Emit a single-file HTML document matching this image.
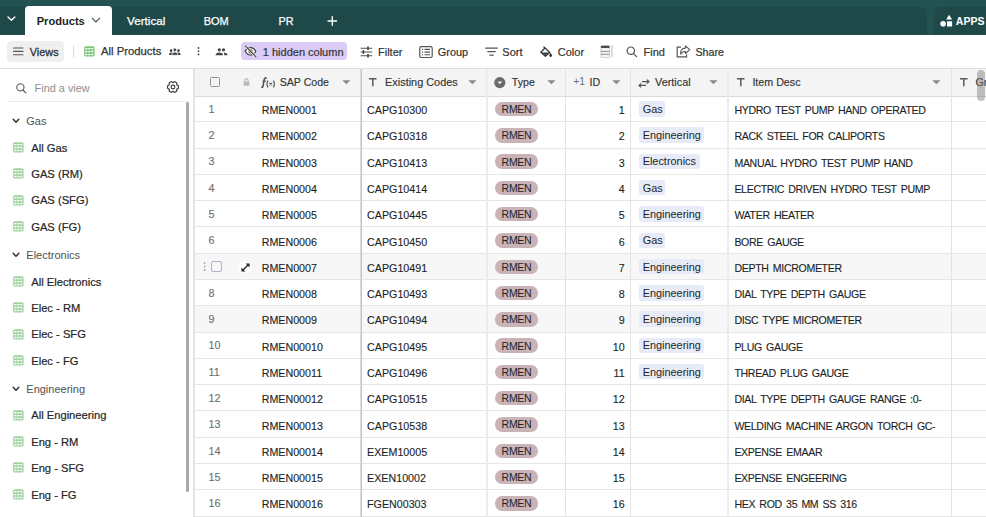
<!DOCTYPE html>
<html><head><meta charset="utf-8"><style>
html,body{margin:0;padding:0;}
body{width:986px;height:517px;overflow:hidden;position:relative;background:#fff;font-family:"Liberation Sans", sans-serif;}
.t{position:absolute;white-space:pre;}
.r{position:absolute;}
svg.r{overflow:visible;}
</style></head><body>
<div class="r" style="left:0.00px;top:0.00px;width:986.00px;height:35.00px;background:#225352;"></div>
<div class="r" style="left:0.00px;top:6.80px;width:927.00px;height:28.20px;background:#1e4948;border-top-right-radius:6px"></div>
<div class="r" style="left:934.00px;top:6.80px;width:60.00px;height:28.20px;background:#1e4948;border-top-left-radius:6px"></div>
<svg class="r" style="left:7.00px;top:16.00px" width="9" height="6" viewBox="0 0 9 6"><polyline points="1.0,0.9 4.4,4.3 7.8,0.9" fill="none" stroke="#fff" stroke-width="1.4" stroke-linecap="round" stroke-linejoin="round"/></svg>
<div class="r" style="left:25.00px;top:6.00px;width:87.00px;height:30.00px;background:#ffffff;border-top-left-radius:4px;border-top-right-radius:4px"></div>
<div class="t" style="left:36.70px;top:15.60px;font-size:11.1px;line-height:11.1px;font-weight:700;color:#1d1f25;">Products</div>
<svg class="r" style="left:91.00px;top:17.00px" width="10" height="7" viewBox="0 0 10 7"><polyline points="1.2,1.2 4.9,5 8.6,1.2" fill="none" stroke="#555" stroke-width="1.1" stroke-linecap="round" stroke-linejoin="round"/></svg>
<div class="t" style="left:127.00px;top:15.10px;font-size:11.7px;line-height:11.7px;font-weight:400;color:#fff;-webkit-text-stroke:0.25px #fff">Vertical</div>
<div class="t" style="left:203.70px;top:15.69px;font-size:11.0px;line-height:11.0px;font-weight:400;color:#fff;-webkit-text-stroke:0.25px #fff">BOM</div>
<div class="t" style="left:278.60px;top:15.86px;font-size:10.8px;line-height:10.8px;font-weight:400;color:#fff;-webkit-text-stroke:0.25px #fff">PR</div>
<svg class="r" style="left:327.00px;top:16.00px" width="11" height="10" viewBox="0 0 11 10"><path d="M5.3 0.8V9.2M1 5H9.6" stroke="#fff" stroke-width="1.4" stroke-linecap="round"/></svg>
<svg class="r" style="left:939.00px;top:14.00px" width="15" height="13" viewBox="0 0 15 13"><path d="M10.1 0.8L13.1 5.6H7.1Z" fill="#fff"/><circle cx="4.1" cy="9.7" r="2.8" fill="#fff"/><rect x="8" y="7.3" width="5.1" height="5.2" fill="#fff"/></svg>
<div class="t" style="left:955.80px;top:16.11px;font-size:10.5px;line-height:10.5px;font-weight:700;color:#fff;">APPS</div>
<div class="r" style="left:0.00px;top:35.00px;width:986.00px;height:33.00px;background:#ffffff;"></div>
<div class="r" style="left:0.00px;top:68.00px;width:986.00px;height:1.00px;background:#dedede;"></div>
<div class="r" style="left:7.00px;top:41.00px;width:57.00px;height:21.00px;background:#efefef;border-radius:4px"></div>
<svg class="r" style="left:12.50px;top:47.00px" width="12" height="9" viewBox="0 0 12 9"><path d="M0.5 1H10M0.5 4.4H10M0.5 7.8H10" stroke="#555" stroke-width="1.1" stroke-linecap="round"/></svg>
<div class="t" style="left:29.80px;top:46.77px;font-size:10.9px;line-height:10.9px;font-weight:400;color:#333;-webkit-text-stroke:0.3px #333">Views</div>
<div class="r" style="left:73.00px;top:45.00px;width:1.00px;height:13.00px;background:#dcdcdc;"></div>
<svg class="r" style="left:83.50px;top:46.30px" width="11" height="11" viewBox="0 0 11 11"><rect x="0.2" y="0.2" width="10.4" height="10.4" rx="1.6" fill="#7cc47c"/><rect x="1.3" y="2.0" width="2.1" height="1.4" fill="#fff"/><rect x="4.2" y="2.0" width="2.1" height="1.4" fill="#fff"/><rect x="7.2" y="2.0" width="2.1" height="1.4" fill="#fff"/><rect x="1.3" y="4.9" width="2.1" height="1.4" fill="#fff"/><rect x="4.2" y="4.9" width="2.1" height="1.4" fill="#fff"/><rect x="7.2" y="4.9" width="2.1" height="1.4" fill="#fff"/><rect x="1.3" y="7.8" width="2.1" height="1.4" fill="#fff"/><rect x="4.2" y="7.8" width="2.1" height="1.4" fill="#fff"/><rect x="7.2" y="7.8" width="2.1" height="1.4" fill="#fff"/></svg>
<div class="t" style="left:101.00px;top:46.43px;font-size:11.3px;line-height:11.3px;font-weight:400;color:#333;-webkit-text-stroke:0.25px #333">All Products</div>
<svg class="r" style="left:169.30px;top:47.60px" width="12" height="8" viewBox="0 0 12 8"><ellipse cx="2.1" cy="2.6" rx="1.2" ry="1.6" fill="#444"/><path d="M0 7C0 5.3 0.9 4.5 2.1 4.5S4.2 5.3 4.2 7Z" fill="#444"/><ellipse cx="9.5" cy="2.6" rx="1.2" ry="1.6" fill="#444"/><path d="M7.4 7C7.4 5.3 8.3 4.5 9.5 4.5S11.6 5.3 11.6 7Z" fill="#444"/><ellipse cx="5.8" cy="1.9" rx="1.7" ry="1.95" fill="#444" stroke="#fff" stroke-width="0.7"/><path d="M2.7 7.3C2.8 5 4.2 4.1 5.8 4.1S8.8 5 8.9 7.3Z" fill="#444" stroke="#fff" stroke-width="0.7"/></svg>
<svg class="r" style="left:196.50px;top:47.00px" width="4" height="9" viewBox="0 0 4 9"><circle cx="1.5" cy="1" r="0.95" fill="#444"/><circle cx="1.5" cy="4.1" r="0.95" fill="#444"/><circle cx="1.5" cy="7.4" r="0.95" fill="#444"/></svg>
<svg class="r" style="left:214.50px;top:47.50px" width="14" height="8" viewBox="0 0 14 8"><circle cx="4.3" cy="1.8" r="1.6" fill="#444"/><circle cx="8.5" cy="1.8" r="1.6" fill="#444"/><path d="M0.5 7.3C0.6 5.3 2.3 4.4 4.3 4.4S8 5.3 8.1 7.3Z" fill="#444"/><path d="M8.6 4.5C10.6 4.5 12.5 5.4 12.6 7.3H9.3C9.3 6.1 9.1 5.2 8.6 4.5Z" fill="#444"/></svg>
<div class="r" style="left:241.00px;top:42.20px;width:105.60px;height:18.00px;background:#dacbf7;border-radius:4px"></div>
<svg class="r" style="left:244.00px;top:45.00px" width="13" height="12" viewBox="0 0 13 12"><path d="M1.2 6.3C2.6 3.8 4.4 2.6 6.5 2.6S10.4 3.8 11.8 6.3C10.4 8.8 8.6 10 6.5 10S2.6 8.8 1.2 6.3Z" fill="#fff" stroke="#3a3a3a" stroke-width="1.2"/><circle cx="6.6" cy="6.4" r="2.1" fill="#3a3a3a"/><path d="M2 1.6L11.6 11.4" stroke="#fff" stroke-width="2.4"/><path d="M1.6 1.2L11.8 11.6" stroke="#3a3a3a" stroke-width="1.15" stroke-linecap="round"/></svg>
<div class="t" style="left:262.80px;top:46.69px;font-size:11.0px;line-height:11.0px;font-weight:400;color:#333;-webkit-text-stroke:0.2px #333">1 hidden column</div>
<svg class="r" style="left:360.00px;top:45.50px" width="13" height="12" viewBox="0 0 13 12"><path d="M0.6 2.2H12.2M0.6 6H12.2M0.6 9.8H12.2" stroke="#555" stroke-width="1.1"/><rect x="7.2" y="0.3" width="1.6" height="4" rx="0.8" fill="#444"/><rect x="2.6" y="4" width="1.6" height="4" rx="0.8" fill="#444"/><rect x="7.2" y="7.8" width="1.6" height="4" rx="0.8" fill="#444"/></svg>
<div class="t" style="left:378.00px;top:46.69px;font-size:11.0px;line-height:11.0px;font-weight:400;color:#333;-webkit-text-stroke:0.2px #333">Filter</div>
<svg class="r" style="left:418.50px;top:45.50px" width="14" height="12" viewBox="0 0 14 12"><rect x="0.8" y="0.7" width="12.4" height="10.8" rx="1.5" fill="none" stroke="#555" stroke-width="1.2"/><path d="M3 3.4H4.2M3 6.1H4.2M3 8.8H4.2M5.5 3.4H11M5.5 6.1H11M5.5 8.8H11" stroke="#555" stroke-width="1.1"/></svg>
<div class="t" style="left:437.80px;top:46.77px;font-size:10.9px;line-height:10.9px;font-weight:400;color:#333;-webkit-text-stroke:0.2px #333">Group</div>
<svg class="r" style="left:484.50px;top:46.50px" width="13" height="10" viewBox="0 0 13 10"><path d="M0.7 1.2H12.3M2.8 4.7H10.2M4.8 8.2H8.2" stroke="#555" stroke-width="1.2" stroke-linecap="round"/></svg>
<div class="t" style="left:502.30px;top:46.69px;font-size:11.0px;line-height:11.0px;font-weight:400;color:#333;-webkit-text-stroke:0.2px #333">Sort</div>
<svg class="r" style="left:540.00px;top:45.00px" width="14" height="13" viewBox="0 0 14 13"><path d="M3.5 1.5L9.8 7.5 5.4 11.3 0.9 7.3 4.7 3.3" fill="none" stroke="#3a3a3a" stroke-width="1.3" stroke-linejoin="round"/><path d="M1.8 7.4H9.1L5.4 10.6Z" fill="#3a3a3a"/><path d="M10.7 8.1C11.6 9.2 12.1 9.9 12.1 10.5A1.4 1.4 0 0 1 9.3 10.5C9.3 9.9 9.8 9.2 10.7 8.1Z" fill="#3a3a3a"/></svg>
<div class="t" style="left:557.80px;top:46.69px;font-size:11.0px;line-height:11.0px;font-weight:400;color:#333;-webkit-text-stroke:0.2px #333">Color</div>
<svg class="r" style="left:600.00px;top:45.00px" width="14" height="13" viewBox="0 0 14 13"><rect x="0.9" y="0.8" width="8.7" height="11.8" rx="1" fill="#f4f4f4" stroke="#c8c8c8" stroke-width="0.8"/><rect x="0.9" y="0.8" width="8.7" height="2.2" rx="0.8" fill="#4a4a4a"/><path d="M0.9 6.4H9.6M0.9 9.3H9.6" stroke="#888" stroke-width="0.9"/><rect x="11.2" y="0.3" width="1.5" height="11.7" fill="#d0d0d0"/></svg>
<svg class="r" style="left:626.00px;top:46.00px" width="12" height="12" viewBox="0 0 12 12"><circle cx="4.8" cy="4.7" r="3.7" fill="none" stroke="#555" stroke-width="1.2"/><path d="M7.6 7.6L10.6 10.6" stroke="#555" stroke-width="1.3" stroke-linecap="round"/></svg>
<div class="t" style="left:643.50px;top:46.69px;font-size:11.0px;line-height:11.0px;font-weight:400;color:#333;-webkit-text-stroke:0.2px #333">Find</div>
<svg class="r" style="left:676.00px;top:45.00px" width="15" height="13" viewBox="0 0 15 13"><path d="M5 2.2H1.2V11.8H10.6V9.6" fill="none" stroke="#555" stroke-width="1.2"/><path d="M9.4 1.0L13.8 4.7 9.4 8.5V6.5C7 6.3 5.6 7.4 4.8 9.2C4.1 6 5.6 3.2 9.4 3.1Z" fill="none" stroke="#555" stroke-width="1.1" stroke-linejoin="round"/></svg>
<div class="t" style="left:695.40px;top:46.94px;font-size:10.7px;line-height:10.7px;font-weight:400;color:#333;-webkit-text-stroke:0.2px #333">Share</div>
<div class="r" style="left:0.00px;top:69.00px;width:194.00px;height:448.00px;background:#ffffff;"></div>
<svg class="r" style="left:15.50px;top:83.00px" width="11" height="11" viewBox="0 0 11 11"><circle cx="4.4" cy="4.4" r="3.6" fill="none" stroke="#555" stroke-width="1.1"/><path d="M7 7L9.8 9.8" stroke="#555" stroke-width="1.2" stroke-linecap="round"/></svg>
<div class="t" style="left:34.60px;top:82.77px;font-size:10.9px;line-height:10.9px;font-weight:400;color:#8e8e8e;">Find a view</div>
<svg class="r" style="left:166.00px;top:80.60px" width="14" height="12" viewBox="0 0 14 12"><path d="M10.65 3.72 L12.43 4.65 L12.43 7.35 L10.65 8.28 L10.80 8.02 L10.89 10.03 L8.54 11.38 L6.85 10.30 L7.15 10.30 L5.46 11.38 L3.11 10.03 L3.20 8.02 L3.35 8.28 L1.57 7.35 L1.57 4.65 L3.35 3.72 L3.20 3.98 L3.11 1.97 L5.46 0.62 L7.15 1.70 L6.85 1.70 L8.54 0.62 L10.89 1.97 L10.80 3.98Z" fill="none" stroke="#3a3a3a" stroke-width="1.15" stroke-linejoin="round"/><circle cx="7" cy="6" r="1.9" fill="none" stroke="#3a3a3a" stroke-width="1.1"/></svg>
<div class="r" style="left:7.00px;top:101.00px;width:182.00px;height:1.00px;background:#ebebeb;"></div>
<div class="r" style="left:186.00px;top:102.00px;width:3.30px;height:390.00px;background:#a9a9a9;border-radius:1.7px"></div>
<div class="r" style="left:193.00px;top:69.00px;width:2.00px;height:448.00px;background:#e4e4e4;"></div>
<svg class="r" style="left:12.00px;top:117.75px" width="8" height="6" viewBox="0 0 8 6"><polyline points="1.2,1.3 4,4.3 6.8,1.3" fill="none" stroke="#333" stroke-width="1.5" stroke-linecap="round" stroke-linejoin="round"/></svg>
<div class="t" style="left:26.30px;top:115.69px;font-size:11.0px;line-height:11.0px;font-weight:400;color:#505050;">Gas</div>
<svg class="r" style="left:12.50px;top:142.00px" width="11" height="11" viewBox="0 0 11 11"><rect x="0.2" y="0.2" width="10.4" height="10.4" rx="1.6" fill="#9ed39e"/><rect x="1.3" y="2.0" width="2.1" height="1.4" fill="#fff"/><rect x="4.2" y="2.0" width="2.1" height="1.4" fill="#fff"/><rect x="7.2" y="2.0" width="2.1" height="1.4" fill="#fff"/><rect x="1.3" y="4.9" width="2.1" height="1.4" fill="#fff"/><rect x="4.2" y="4.9" width="2.1" height="1.4" fill="#fff"/><rect x="7.2" y="4.9" width="2.1" height="1.4" fill="#fff"/><rect x="1.3" y="7.8" width="2.1" height="1.4" fill="#fff"/><rect x="4.2" y="7.8" width="2.1" height="1.4" fill="#fff"/><rect x="7.2" y="7.8" width="2.1" height="1.4" fill="#fff"/></svg>
<div class="t" style="left:31.20px;top:142.52px;font-size:11.2px;line-height:11.2px;font-weight:400;color:#262626;-webkit-text-stroke:0.2px #262626">All Gas</div>
<svg class="r" style="left:12.50px;top:168.36px" width="11" height="11" viewBox="0 0 11 11"><rect x="0.2" y="0.2" width="10.4" height="10.4" rx="1.6" fill="#9ed39e"/><rect x="1.3" y="2.0" width="2.1" height="1.4" fill="#fff"/><rect x="4.2" y="2.0" width="2.1" height="1.4" fill="#fff"/><rect x="7.2" y="2.0" width="2.1" height="1.4" fill="#fff"/><rect x="1.3" y="4.9" width="2.1" height="1.4" fill="#fff"/><rect x="4.2" y="4.9" width="2.1" height="1.4" fill="#fff"/><rect x="7.2" y="4.9" width="2.1" height="1.4" fill="#fff"/><rect x="1.3" y="7.8" width="2.1" height="1.4" fill="#fff"/><rect x="4.2" y="7.8" width="2.1" height="1.4" fill="#fff"/><rect x="7.2" y="7.8" width="2.1" height="1.4" fill="#fff"/></svg>
<div class="t" style="left:31.20px;top:168.52px;font-size:11.2px;line-height:11.2px;font-weight:400;color:#262626;-webkit-text-stroke:0.2px #262626">GAS (RM)</div>
<svg class="r" style="left:12.50px;top:194.72px" width="11" height="11" viewBox="0 0 11 11"><rect x="0.2" y="0.2" width="10.4" height="10.4" rx="1.6" fill="#9ed39e"/><rect x="1.3" y="2.0" width="2.1" height="1.4" fill="#fff"/><rect x="4.2" y="2.0" width="2.1" height="1.4" fill="#fff"/><rect x="7.2" y="2.0" width="2.1" height="1.4" fill="#fff"/><rect x="1.3" y="4.9" width="2.1" height="1.4" fill="#fff"/><rect x="4.2" y="4.9" width="2.1" height="1.4" fill="#fff"/><rect x="7.2" y="4.9" width="2.1" height="1.4" fill="#fff"/><rect x="1.3" y="7.8" width="2.1" height="1.4" fill="#fff"/><rect x="4.2" y="7.8" width="2.1" height="1.4" fill="#fff"/><rect x="7.2" y="7.8" width="2.1" height="1.4" fill="#fff"/></svg>
<div class="t" style="left:31.20px;top:194.52px;font-size:11.2px;line-height:11.2px;font-weight:400;color:#262626;-webkit-text-stroke:0.2px #262626">GAS (SFG)</div>
<svg class="r" style="left:12.50px;top:221.08px" width="11" height="11" viewBox="0 0 11 11"><rect x="0.2" y="0.2" width="10.4" height="10.4" rx="1.6" fill="#9ed39e"/><rect x="1.3" y="2.0" width="2.1" height="1.4" fill="#fff"/><rect x="4.2" y="2.0" width="2.1" height="1.4" fill="#fff"/><rect x="7.2" y="2.0" width="2.1" height="1.4" fill="#fff"/><rect x="1.3" y="4.9" width="2.1" height="1.4" fill="#fff"/><rect x="4.2" y="4.9" width="2.1" height="1.4" fill="#fff"/><rect x="7.2" y="4.9" width="2.1" height="1.4" fill="#fff"/><rect x="1.3" y="7.8" width="2.1" height="1.4" fill="#fff"/><rect x="4.2" y="7.8" width="2.1" height="1.4" fill="#fff"/><rect x="7.2" y="7.8" width="2.1" height="1.4" fill="#fff"/></svg>
<div class="t" style="left:31.20px;top:221.52px;font-size:11.2px;line-height:11.2px;font-weight:400;color:#262626;-webkit-text-stroke:0.2px #262626">GAS (FG)</div>
<svg class="r" style="left:12.00px;top:251.63px" width="8" height="6" viewBox="0 0 8 6"><polyline points="1.2,1.3 4,4.3 6.8,1.3" fill="none" stroke="#333" stroke-width="1.5" stroke-linecap="round" stroke-linejoin="round"/></svg>
<div class="t" style="left:26.30px;top:249.69px;font-size:11.0px;line-height:11.0px;font-weight:400;color:#505050;">Electronics</div>
<svg class="r" style="left:12.50px;top:275.88px" width="11" height="11" viewBox="0 0 11 11"><rect x="0.2" y="0.2" width="10.4" height="10.4" rx="1.6" fill="#9ed39e"/><rect x="1.3" y="2.0" width="2.1" height="1.4" fill="#fff"/><rect x="4.2" y="2.0" width="2.1" height="1.4" fill="#fff"/><rect x="7.2" y="2.0" width="2.1" height="1.4" fill="#fff"/><rect x="1.3" y="4.9" width="2.1" height="1.4" fill="#fff"/><rect x="4.2" y="4.9" width="2.1" height="1.4" fill="#fff"/><rect x="7.2" y="4.9" width="2.1" height="1.4" fill="#fff"/><rect x="1.3" y="7.8" width="2.1" height="1.4" fill="#fff"/><rect x="4.2" y="7.8" width="2.1" height="1.4" fill="#fff"/><rect x="7.2" y="7.8" width="2.1" height="1.4" fill="#fff"/></svg>
<div class="t" style="left:31.20px;top:276.52px;font-size:11.2px;line-height:11.2px;font-weight:400;color:#262626;-webkit-text-stroke:0.2px #262626">All Electronics</div>
<svg class="r" style="left:12.50px;top:302.24px" width="11" height="11" viewBox="0 0 11 11"><rect x="0.2" y="0.2" width="10.4" height="10.4" rx="1.6" fill="#9ed39e"/><rect x="1.3" y="2.0" width="2.1" height="1.4" fill="#fff"/><rect x="4.2" y="2.0" width="2.1" height="1.4" fill="#fff"/><rect x="7.2" y="2.0" width="2.1" height="1.4" fill="#fff"/><rect x="1.3" y="4.9" width="2.1" height="1.4" fill="#fff"/><rect x="4.2" y="4.9" width="2.1" height="1.4" fill="#fff"/><rect x="7.2" y="4.9" width="2.1" height="1.4" fill="#fff"/><rect x="1.3" y="7.8" width="2.1" height="1.4" fill="#fff"/><rect x="4.2" y="7.8" width="2.1" height="1.4" fill="#fff"/><rect x="7.2" y="7.8" width="2.1" height="1.4" fill="#fff"/></svg>
<div class="t" style="left:31.20px;top:302.52px;font-size:11.2px;line-height:11.2px;font-weight:400;color:#262626;-webkit-text-stroke:0.2px #262626">Elec - RM</div>
<svg class="r" style="left:12.50px;top:328.60px" width="11" height="11" viewBox="0 0 11 11"><rect x="0.2" y="0.2" width="10.4" height="10.4" rx="1.6" fill="#9ed39e"/><rect x="1.3" y="2.0" width="2.1" height="1.4" fill="#fff"/><rect x="4.2" y="2.0" width="2.1" height="1.4" fill="#fff"/><rect x="7.2" y="2.0" width="2.1" height="1.4" fill="#fff"/><rect x="1.3" y="4.9" width="2.1" height="1.4" fill="#fff"/><rect x="4.2" y="4.9" width="2.1" height="1.4" fill="#fff"/><rect x="7.2" y="4.9" width="2.1" height="1.4" fill="#fff"/><rect x="1.3" y="7.8" width="2.1" height="1.4" fill="#fff"/><rect x="4.2" y="7.8" width="2.1" height="1.4" fill="#fff"/><rect x="7.2" y="7.8" width="2.1" height="1.4" fill="#fff"/></svg>
<div class="t" style="left:31.20px;top:328.52px;font-size:11.2px;line-height:11.2px;font-weight:400;color:#262626;-webkit-text-stroke:0.2px #262626">Elec - SFG</div>
<svg class="r" style="left:12.50px;top:354.96px" width="11" height="11" viewBox="0 0 11 11"><rect x="0.2" y="0.2" width="10.4" height="10.4" rx="1.6" fill="#9ed39e"/><rect x="1.3" y="2.0" width="2.1" height="1.4" fill="#fff"/><rect x="4.2" y="2.0" width="2.1" height="1.4" fill="#fff"/><rect x="7.2" y="2.0" width="2.1" height="1.4" fill="#fff"/><rect x="1.3" y="4.9" width="2.1" height="1.4" fill="#fff"/><rect x="4.2" y="4.9" width="2.1" height="1.4" fill="#fff"/><rect x="7.2" y="4.9" width="2.1" height="1.4" fill="#fff"/><rect x="1.3" y="7.8" width="2.1" height="1.4" fill="#fff"/><rect x="4.2" y="7.8" width="2.1" height="1.4" fill="#fff"/><rect x="7.2" y="7.8" width="2.1" height="1.4" fill="#fff"/></svg>
<div class="t" style="left:31.20px;top:355.52px;font-size:11.2px;line-height:11.2px;font-weight:400;color:#262626;-webkit-text-stroke:0.2px #262626">Elec - FG</div>
<svg class="r" style="left:12.00px;top:385.51px" width="8" height="6" viewBox="0 0 8 6"><polyline points="1.2,1.3 4,4.3 6.8,1.3" fill="none" stroke="#333" stroke-width="1.5" stroke-linecap="round" stroke-linejoin="round"/></svg>
<div class="t" style="left:26.30px;top:383.69px;font-size:11.0px;line-height:11.0px;font-weight:400;color:#505050;">Engineering</div>
<svg class="r" style="left:12.50px;top:409.76px" width="11" height="11" viewBox="0 0 11 11"><rect x="0.2" y="0.2" width="10.4" height="10.4" rx="1.6" fill="#9ed39e"/><rect x="1.3" y="2.0" width="2.1" height="1.4" fill="#fff"/><rect x="4.2" y="2.0" width="2.1" height="1.4" fill="#fff"/><rect x="7.2" y="2.0" width="2.1" height="1.4" fill="#fff"/><rect x="1.3" y="4.9" width="2.1" height="1.4" fill="#fff"/><rect x="4.2" y="4.9" width="2.1" height="1.4" fill="#fff"/><rect x="7.2" y="4.9" width="2.1" height="1.4" fill="#fff"/><rect x="1.3" y="7.8" width="2.1" height="1.4" fill="#fff"/><rect x="4.2" y="7.8" width="2.1" height="1.4" fill="#fff"/><rect x="7.2" y="7.8" width="2.1" height="1.4" fill="#fff"/></svg>
<div class="t" style="left:31.20px;top:409.52px;font-size:11.2px;line-height:11.2px;font-weight:400;color:#262626;-webkit-text-stroke:0.2px #262626">All Engineering</div>
<svg class="r" style="left:12.50px;top:436.12px" width="11" height="11" viewBox="0 0 11 11"><rect x="0.2" y="0.2" width="10.4" height="10.4" rx="1.6" fill="#9ed39e"/><rect x="1.3" y="2.0" width="2.1" height="1.4" fill="#fff"/><rect x="4.2" y="2.0" width="2.1" height="1.4" fill="#fff"/><rect x="7.2" y="2.0" width="2.1" height="1.4" fill="#fff"/><rect x="1.3" y="4.9" width="2.1" height="1.4" fill="#fff"/><rect x="4.2" y="4.9" width="2.1" height="1.4" fill="#fff"/><rect x="7.2" y="4.9" width="2.1" height="1.4" fill="#fff"/><rect x="1.3" y="7.8" width="2.1" height="1.4" fill="#fff"/><rect x="4.2" y="7.8" width="2.1" height="1.4" fill="#fff"/><rect x="7.2" y="7.8" width="2.1" height="1.4" fill="#fff"/></svg>
<div class="t" style="left:31.20px;top:436.52px;font-size:11.2px;line-height:11.2px;font-weight:400;color:#262626;-webkit-text-stroke:0.2px #262626">Eng - RM</div>
<svg class="r" style="left:12.50px;top:462.48px" width="11" height="11" viewBox="0 0 11 11"><rect x="0.2" y="0.2" width="10.4" height="10.4" rx="1.6" fill="#9ed39e"/><rect x="1.3" y="2.0" width="2.1" height="1.4" fill="#fff"/><rect x="4.2" y="2.0" width="2.1" height="1.4" fill="#fff"/><rect x="7.2" y="2.0" width="2.1" height="1.4" fill="#fff"/><rect x="1.3" y="4.9" width="2.1" height="1.4" fill="#fff"/><rect x="4.2" y="4.9" width="2.1" height="1.4" fill="#fff"/><rect x="7.2" y="4.9" width="2.1" height="1.4" fill="#fff"/><rect x="1.3" y="7.8" width="2.1" height="1.4" fill="#fff"/><rect x="4.2" y="7.8" width="2.1" height="1.4" fill="#fff"/><rect x="7.2" y="7.8" width="2.1" height="1.4" fill="#fff"/></svg>
<div class="t" style="left:31.20px;top:462.52px;font-size:11.2px;line-height:11.2px;font-weight:400;color:#262626;-webkit-text-stroke:0.2px #262626">Eng - SFG</div>
<svg class="r" style="left:12.50px;top:488.84px" width="11" height="11" viewBox="0 0 11 11"><rect x="0.2" y="0.2" width="10.4" height="10.4" rx="1.6" fill="#9ed39e"/><rect x="1.3" y="2.0" width="2.1" height="1.4" fill="#fff"/><rect x="4.2" y="2.0" width="2.1" height="1.4" fill="#fff"/><rect x="7.2" y="2.0" width="2.1" height="1.4" fill="#fff"/><rect x="1.3" y="4.9" width="2.1" height="1.4" fill="#fff"/><rect x="4.2" y="4.9" width="2.1" height="1.4" fill="#fff"/><rect x="7.2" y="4.9" width="2.1" height="1.4" fill="#fff"/><rect x="1.3" y="7.8" width="2.1" height="1.4" fill="#fff"/><rect x="4.2" y="7.8" width="2.1" height="1.4" fill="#fff"/><rect x="7.2" y="7.8" width="2.1" height="1.4" fill="#fff"/></svg>
<div class="t" style="left:31.20px;top:489.52px;font-size:11.2px;line-height:11.2px;font-weight:400;color:#262626;-webkit-text-stroke:0.2px #262626">Eng - FG</div>
<div class="r" style="left:195.00px;top:69.00px;width:791.00px;height:27.00px;background:#f4f4f4;"></div>
<div class="r" style="left:195.00px;top:96.00px;width:791.00px;height:1.00px;background:#dcdcdc;"></div>
<div class="r" style="left:195.00px;top:121.00px;width:791.00px;height:1.00px;background:#e6e6e6;"></div>
<div class="t" style="left:208.50px;top:103.86px;font-size:10.8px;line-height:10.8px;font-weight:400;color:#6e6e6e;-webkit-text-stroke:0.1px #6e6e6e">1</div>
<div class="t" style="left:261.70px;top:104.94px;font-size:10.7px;line-height:10.7px;font-weight:400;color:#1d1f25;-webkit-text-stroke:0.12px #1d1f25">RMEN0001</div>
<div class="t" style="left:367.10px;top:104.94px;font-size:10.7px;line-height:10.7px;font-weight:400;color:#1d1f25;-webkit-text-stroke:0.12px #1d1f25">CAPG10300</div>
<div class="r" style="left:494.50px;top:101.90px;width:43.40px;height:14.40px;background:#cab3b6;border-radius:7.2px"></div>
<div class="t" style="left:501.60px;top:104.11px;font-size:10.5px;line-height:10.5px;font-weight:400;color:#1d1f25;letter-spacing:-0.3px">RMEN</div>
<div class="t" style="right:361.40px;top:104.94px;font-size:10.7px;line-height:10.7px;font-weight:400;color:#1d1f25;-webkit-text-stroke:0.12px #1d1f25">1</div>
<div class="r" style="left:639.10px;top:101.20px;width:25.80px;height:15.40px;background:#e7ebf7;border-radius:3px"></div>
<div class="t" style="left:642.70px;top:103.77px;font-size:10.9px;line-height:10.9px;font-weight:400;color:#1d1f25;">Gas</div>
<div class="t" style="left:734.40px;top:105.03px;font-size:10.6px;line-height:10.6px;font-weight:400;color:#1d1f25;letter-spacing:-0.34px;word-spacing:1.6px;-webkit-text-stroke:0.12px #1d1f25">HYDRO TEST PUMP HAND OPERATED</div>
<div class="r" style="left:195.00px;top:148.00px;width:791.00px;height:1.00px;background:#e6e6e6;"></div>
<div class="t" style="left:208.50px;top:129.86px;font-size:10.8px;line-height:10.8px;font-weight:400;color:#6e6e6e;-webkit-text-stroke:0.1px #6e6e6e">2</div>
<div class="t" style="left:261.70px;top:130.94px;font-size:10.7px;line-height:10.7px;font-weight:400;color:#1d1f25;-webkit-text-stroke:0.12px #1d1f25">RMEN0002</div>
<div class="t" style="left:367.10px;top:130.94px;font-size:10.7px;line-height:10.7px;font-weight:400;color:#1d1f25;-webkit-text-stroke:0.12px #1d1f25">CAPG10318</div>
<div class="r" style="left:494.50px;top:128.19px;width:43.40px;height:14.40px;background:#cab3b6;border-radius:7.2px"></div>
<div class="t" style="left:501.60px;top:130.11px;font-size:10.5px;line-height:10.5px;font-weight:400;color:#1d1f25;letter-spacing:-0.3px">RMEN</div>
<div class="t" style="right:361.40px;top:130.94px;font-size:10.7px;line-height:10.7px;font-weight:400;color:#1d1f25;-webkit-text-stroke:0.12px #1d1f25">2</div>
<div class="r" style="left:639.10px;top:127.49px;width:65.00px;height:15.40px;background:#e7ebf7;border-radius:3px"></div>
<div class="t" style="left:642.70px;top:129.77px;font-size:10.9px;line-height:10.9px;font-weight:400;color:#1d1f25;">Engineering</div>
<div class="t" style="left:734.40px;top:131.03px;font-size:10.6px;line-height:10.6px;font-weight:400;color:#1d1f25;letter-spacing:-0.34px;word-spacing:1.6px;-webkit-text-stroke:0.12px #1d1f25">RACK STEEL FOR CALIPORTS</div>
<div class="r" style="left:195.00px;top:174.00px;width:791.00px;height:1.00px;background:#e6e6e6;"></div>
<div class="t" style="left:208.50px;top:155.86px;font-size:10.8px;line-height:10.8px;font-weight:400;color:#6e6e6e;-webkit-text-stroke:0.1px #6e6e6e">3</div>
<div class="t" style="left:261.70px;top:157.94px;font-size:10.7px;line-height:10.7px;font-weight:400;color:#1d1f25;-webkit-text-stroke:0.12px #1d1f25">RMEN0003</div>
<div class="t" style="left:367.10px;top:157.94px;font-size:10.7px;line-height:10.7px;font-weight:400;color:#1d1f25;-webkit-text-stroke:0.12px #1d1f25">CAPG10413</div>
<div class="r" style="left:494.50px;top:154.47px;width:43.40px;height:14.40px;background:#cab3b6;border-radius:7.2px"></div>
<div class="t" style="left:501.60px;top:157.11px;font-size:10.5px;line-height:10.5px;font-weight:400;color:#1d1f25;letter-spacing:-0.3px">RMEN</div>
<div class="t" style="right:361.40px;top:157.94px;font-size:10.7px;line-height:10.7px;font-weight:400;color:#1d1f25;-webkit-text-stroke:0.12px #1d1f25">3</div>
<div class="r" style="left:639.10px;top:153.77px;width:61.00px;height:15.40px;background:#e7ebf7;border-radius:3px"></div>
<div class="t" style="left:642.70px;top:155.77px;font-size:10.9px;line-height:10.9px;font-weight:400;color:#1d1f25;">Electronics</div>
<div class="t" style="left:734.40px;top:158.03px;font-size:10.6px;line-height:10.6px;font-weight:400;color:#1d1f25;letter-spacing:-0.34px;word-spacing:1.6px;-webkit-text-stroke:0.12px #1d1f25">MANUAL HYDRO TEST PUMP HAND</div>
<div class="r" style="left:195.00px;top:200.00px;width:791.00px;height:1.00px;background:#e6e6e6;"></div>
<div class="t" style="left:208.50px;top:182.86px;font-size:10.8px;line-height:10.8px;font-weight:400;color:#6e6e6e;-webkit-text-stroke:0.1px #6e6e6e">4</div>
<div class="t" style="left:261.70px;top:183.94px;font-size:10.7px;line-height:10.7px;font-weight:400;color:#1d1f25;-webkit-text-stroke:0.12px #1d1f25">RMEN0004</div>
<div class="t" style="left:367.10px;top:183.94px;font-size:10.7px;line-height:10.7px;font-weight:400;color:#1d1f25;-webkit-text-stroke:0.12px #1d1f25">CAPG10414</div>
<div class="r" style="left:494.50px;top:180.76px;width:43.40px;height:14.40px;background:#cab3b6;border-radius:7.2px"></div>
<div class="t" style="left:501.60px;top:183.11px;font-size:10.5px;line-height:10.5px;font-weight:400;color:#1d1f25;letter-spacing:-0.3px">RMEN</div>
<div class="t" style="right:361.40px;top:183.94px;font-size:10.7px;line-height:10.7px;font-weight:400;color:#1d1f25;-webkit-text-stroke:0.12px #1d1f25">4</div>
<div class="r" style="left:639.10px;top:180.06px;width:25.80px;height:15.40px;background:#e7ebf7;border-radius:3px"></div>
<div class="t" style="left:642.70px;top:182.77px;font-size:10.9px;line-height:10.9px;font-weight:400;color:#1d1f25;">Gas</div>
<div class="t" style="left:734.40px;top:184.03px;font-size:10.6px;line-height:10.6px;font-weight:400;color:#1d1f25;letter-spacing:-0.34px;word-spacing:1.6px;-webkit-text-stroke:0.12px #1d1f25">ELECTRIC DRIVEN HYDRO TEST PUMP</div>
<div class="r" style="left:195.00px;top:226.00px;width:791.00px;height:1.00px;background:#e6e6e6;"></div>
<div class="t" style="left:208.50px;top:208.86px;font-size:10.8px;line-height:10.8px;font-weight:400;color:#6e6e6e;-webkit-text-stroke:0.1px #6e6e6e">5</div>
<div class="t" style="left:261.70px;top:209.94px;font-size:10.7px;line-height:10.7px;font-weight:400;color:#1d1f25;-webkit-text-stroke:0.12px #1d1f25">RMEN0005</div>
<div class="t" style="left:367.10px;top:209.94px;font-size:10.7px;line-height:10.7px;font-weight:400;color:#1d1f25;-webkit-text-stroke:0.12px #1d1f25">CAPG10445</div>
<div class="r" style="left:494.50px;top:207.04px;width:43.40px;height:14.40px;background:#cab3b6;border-radius:7.2px"></div>
<div class="t" style="left:501.60px;top:209.11px;font-size:10.5px;line-height:10.5px;font-weight:400;color:#1d1f25;letter-spacing:-0.3px">RMEN</div>
<div class="t" style="right:361.40px;top:209.94px;font-size:10.7px;line-height:10.7px;font-weight:400;color:#1d1f25;-webkit-text-stroke:0.12px #1d1f25">5</div>
<div class="r" style="left:639.10px;top:206.34px;width:65.00px;height:15.40px;background:#e7ebf7;border-radius:3px"></div>
<div class="t" style="left:642.70px;top:208.77px;font-size:10.9px;line-height:10.9px;font-weight:400;color:#1d1f25;">Engineering</div>
<div class="t" style="left:734.40px;top:210.03px;font-size:10.6px;line-height:10.6px;font-weight:400;color:#1d1f25;letter-spacing:-0.34px;word-spacing:1.6px;-webkit-text-stroke:0.12px #1d1f25">WATER HEATER</div>
<div class="r" style="left:195.00px;top:253.00px;width:791.00px;height:1.00px;background:#e6e6e6;"></div>
<div class="t" style="left:208.50px;top:234.86px;font-size:10.8px;line-height:10.8px;font-weight:400;color:#6e6e6e;-webkit-text-stroke:0.1px #6e6e6e">6</div>
<div class="t" style="left:261.70px;top:236.94px;font-size:10.7px;line-height:10.7px;font-weight:400;color:#1d1f25;-webkit-text-stroke:0.12px #1d1f25">RMEN0006</div>
<div class="t" style="left:367.10px;top:236.94px;font-size:10.7px;line-height:10.7px;font-weight:400;color:#1d1f25;-webkit-text-stroke:0.12px #1d1f25">CAPG10450</div>
<div class="r" style="left:494.50px;top:233.33px;width:43.40px;height:14.40px;background:#cab3b6;border-radius:7.2px"></div>
<div class="t" style="left:501.60px;top:235.11px;font-size:10.5px;line-height:10.5px;font-weight:400;color:#1d1f25;letter-spacing:-0.3px">RMEN</div>
<div class="t" style="right:361.40px;top:236.94px;font-size:10.7px;line-height:10.7px;font-weight:400;color:#1d1f25;-webkit-text-stroke:0.12px #1d1f25">6</div>
<div class="r" style="left:639.10px;top:232.63px;width:25.80px;height:15.40px;background:#e7ebf7;border-radius:3px"></div>
<div class="t" style="left:642.70px;top:234.77px;font-size:10.9px;line-height:10.9px;font-weight:400;color:#1d1f25;">Gas</div>
<div class="t" style="left:734.40px;top:237.03px;font-size:10.6px;line-height:10.6px;font-weight:400;color:#1d1f25;letter-spacing:-0.34px;word-spacing:1.6px;-webkit-text-stroke:0.12px #1d1f25">BORE GAUGE</div>
<div class="r" style="left:195.00px;top:254.00px;width:791.00px;height:25.00px;background:#f7f7f7;"></div>
<div class="r" style="left:195.00px;top:279.00px;width:791.00px;height:1.00px;background:#e6e6e6;"></div>
<svg class="r" style="left:202.50px;top:261.72px" width="4" height="10" viewBox="0 0 4 10"><circle cx="1.6" cy="1.2" r="0.9" fill="#a0a0a0"/><circle cx="1.6" cy="4.6" r="0.9" fill="#a0a0a0"/><circle cx="1.6" cy="8.0" r="0.9" fill="#a0a0a0"/></svg>
<div class="r" style="left:211.00px;top:260.92px;width:11.20px;height:11.20px;background:transparent;border:1.1px solid #a9b3cb;border-radius:2px;box-sizing:border-box"></div>
<div class="r" style="left:238.80px;top:261.12px;width:12.30px;height:12.30px;background:#ffffff;border-radius:50%"></div>
<svg class="r" style="left:239.50px;top:261.82px" width="11" height="11" viewBox="0 0 11 11"><path d="M2.8 8.2L8.2 2.8" stroke="#2a2a2a" stroke-width="1.35"/><path d="M5.6 1.4H9.6V5.4Z M1.4 5.6V9.6H5.4Z" fill="#2a2a2a"/></svg>
<div class="t" style="left:261.70px;top:262.94px;font-size:10.7px;line-height:10.7px;font-weight:400;color:#1d1f25;-webkit-text-stroke:0.12px #1d1f25">RMEN0007</div>
<div class="t" style="left:367.10px;top:262.94px;font-size:10.7px;line-height:10.7px;font-weight:400;color:#1d1f25;-webkit-text-stroke:0.12px #1d1f25">CAPG10491</div>
<div class="r" style="left:494.50px;top:259.62px;width:43.40px;height:14.40px;background:#cab3b6;border-radius:7.2px"></div>
<div class="t" style="left:501.60px;top:262.11px;font-size:10.5px;line-height:10.5px;font-weight:400;color:#1d1f25;letter-spacing:-0.3px">RMEN</div>
<div class="t" style="right:361.40px;top:262.94px;font-size:10.7px;line-height:10.7px;font-weight:400;color:#1d1f25;-webkit-text-stroke:0.12px #1d1f25">7</div>
<div class="r" style="left:639.10px;top:258.92px;width:65.00px;height:15.40px;background:#e7ebf7;border-radius:3px"></div>
<div class="t" style="left:642.70px;top:261.77px;font-size:10.9px;line-height:10.9px;font-weight:400;color:#1d1f25;">Engineering</div>
<div class="t" style="left:734.40px;top:263.03px;font-size:10.6px;line-height:10.6px;font-weight:400;color:#1d1f25;letter-spacing:-0.34px;word-spacing:1.6px;-webkit-text-stroke:0.12px #1d1f25">DEPTH MICROMETER</div>
<div class="r" style="left:195.00px;top:305.00px;width:791.00px;height:1.00px;background:#e6e6e6;"></div>
<div class="t" style="left:208.50px;top:287.86px;font-size:10.8px;line-height:10.8px;font-weight:400;color:#6e6e6e;-webkit-text-stroke:0.1px #6e6e6e">8</div>
<div class="t" style="left:261.70px;top:288.94px;font-size:10.7px;line-height:10.7px;font-weight:400;color:#1d1f25;-webkit-text-stroke:0.12px #1d1f25">RMEN0008</div>
<div class="t" style="left:367.10px;top:288.94px;font-size:10.7px;line-height:10.7px;font-weight:400;color:#1d1f25;-webkit-text-stroke:0.12px #1d1f25">CAPG10493</div>
<div class="r" style="left:494.50px;top:285.90px;width:43.40px;height:14.40px;background:#cab3b6;border-radius:7.2px"></div>
<div class="t" style="left:501.60px;top:288.11px;font-size:10.5px;line-height:10.5px;font-weight:400;color:#1d1f25;letter-spacing:-0.3px">RMEN</div>
<div class="t" style="right:361.40px;top:288.94px;font-size:10.7px;line-height:10.7px;font-weight:400;color:#1d1f25;-webkit-text-stroke:0.12px #1d1f25">8</div>
<div class="r" style="left:639.10px;top:285.20px;width:65.00px;height:15.40px;background:#e7ebf7;border-radius:3px"></div>
<div class="t" style="left:642.70px;top:287.77px;font-size:10.9px;line-height:10.9px;font-weight:400;color:#1d1f25;">Engineering</div>
<div class="t" style="left:734.40px;top:289.03px;font-size:10.6px;line-height:10.6px;font-weight:400;color:#1d1f25;letter-spacing:-0.34px;word-spacing:1.6px;-webkit-text-stroke:0.12px #1d1f25">DIAL TYPE DEPTH GAUGE</div>
<div class="r" style="left:195.00px;top:306.00px;width:791.00px;height:26.00px;background:#f7f7f7;"></div>
<div class="r" style="left:195.00px;top:332.00px;width:791.00px;height:1.00px;background:#e6e6e6;"></div>
<div class="t" style="left:208.50px;top:313.86px;font-size:10.8px;line-height:10.8px;font-weight:400;color:#6e6e6e;-webkit-text-stroke:0.1px #6e6e6e">9</div>
<div class="t" style="left:261.70px;top:314.94px;font-size:10.7px;line-height:10.7px;font-weight:400;color:#1d1f25;-webkit-text-stroke:0.12px #1d1f25">RMEN0009</div>
<div class="t" style="left:367.10px;top:314.94px;font-size:10.7px;line-height:10.7px;font-weight:400;color:#1d1f25;-webkit-text-stroke:0.12px #1d1f25">CAPG10494</div>
<div class="r" style="left:494.50px;top:312.19px;width:43.40px;height:14.40px;background:#cab3b6;border-radius:7.2px"></div>
<div class="t" style="left:501.60px;top:314.11px;font-size:10.5px;line-height:10.5px;font-weight:400;color:#1d1f25;letter-spacing:-0.3px">RMEN</div>
<div class="t" style="right:361.40px;top:314.94px;font-size:10.7px;line-height:10.7px;font-weight:400;color:#1d1f25;-webkit-text-stroke:0.12px #1d1f25">9</div>
<div class="r" style="left:639.10px;top:311.49px;width:65.00px;height:15.40px;background:#e7ebf7;border-radius:3px"></div>
<div class="t" style="left:642.70px;top:313.77px;font-size:10.9px;line-height:10.9px;font-weight:400;color:#1d1f25;">Engineering</div>
<div class="t" style="left:734.40px;top:315.03px;font-size:10.6px;line-height:10.6px;font-weight:400;color:#1d1f25;letter-spacing:-0.34px;word-spacing:1.6px;-webkit-text-stroke:0.12px #1d1f25">DISC TYPE MICROMETER</div>
<div class="r" style="left:195.00px;top:358.00px;width:791.00px;height:1.00px;background:#e6e6e6;"></div>
<div class="t" style="left:208.50px;top:339.86px;font-size:10.8px;line-height:10.8px;font-weight:400;color:#6e6e6e;-webkit-text-stroke:0.1px #6e6e6e">10</div>
<div class="t" style="left:261.70px;top:341.94px;font-size:10.7px;line-height:10.7px;font-weight:400;color:#1d1f25;-webkit-text-stroke:0.12px #1d1f25">RMEN00010</div>
<div class="t" style="left:367.10px;top:341.94px;font-size:10.7px;line-height:10.7px;font-weight:400;color:#1d1f25;-webkit-text-stroke:0.12px #1d1f25">CAPG10495</div>
<div class="r" style="left:494.50px;top:338.47px;width:43.40px;height:14.40px;background:#cab3b6;border-radius:7.2px"></div>
<div class="t" style="left:501.60px;top:341.11px;font-size:10.5px;line-height:10.5px;font-weight:400;color:#1d1f25;letter-spacing:-0.3px">RMEN</div>
<div class="t" style="right:361.40px;top:341.94px;font-size:10.7px;line-height:10.7px;font-weight:400;color:#1d1f25;-webkit-text-stroke:0.12px #1d1f25">10</div>
<div class="r" style="left:639.10px;top:337.77px;width:65.00px;height:15.40px;background:#e7ebf7;border-radius:3px"></div>
<div class="t" style="left:642.70px;top:339.77px;font-size:10.9px;line-height:10.9px;font-weight:400;color:#1d1f25;">Engineering</div>
<div class="t" style="left:734.40px;top:342.03px;font-size:10.6px;line-height:10.6px;font-weight:400;color:#1d1f25;letter-spacing:-0.34px;word-spacing:1.6px;-webkit-text-stroke:0.12px #1d1f25">PLUG GAUGE</div>
<div class="r" style="left:195.00px;top:384.00px;width:791.00px;height:1.00px;background:#e6e6e6;"></div>
<div class="t" style="left:208.50px;top:366.86px;font-size:10.8px;line-height:10.8px;font-weight:400;color:#6e6e6e;-webkit-text-stroke:0.1px #6e6e6e">11</div>
<div class="t" style="left:261.70px;top:367.94px;font-size:10.7px;line-height:10.7px;font-weight:400;color:#1d1f25;-webkit-text-stroke:0.12px #1d1f25">RMEN00011</div>
<div class="t" style="left:367.10px;top:367.94px;font-size:10.7px;line-height:10.7px;font-weight:400;color:#1d1f25;-webkit-text-stroke:0.12px #1d1f25">CAPG10496</div>
<div class="r" style="left:494.50px;top:364.76px;width:43.40px;height:14.40px;background:#cab3b6;border-radius:7.2px"></div>
<div class="t" style="left:501.60px;top:367.11px;font-size:10.5px;line-height:10.5px;font-weight:400;color:#1d1f25;letter-spacing:-0.3px">RMEN</div>
<div class="t" style="right:361.40px;top:367.94px;font-size:10.7px;line-height:10.7px;font-weight:400;color:#1d1f25;-webkit-text-stroke:0.12px #1d1f25">11</div>
<div class="r" style="left:639.10px;top:364.06px;width:65.00px;height:15.40px;background:#e7ebf7;border-radius:3px"></div>
<div class="t" style="left:642.70px;top:366.77px;font-size:10.9px;line-height:10.9px;font-weight:400;color:#1d1f25;">Engineering</div>
<div class="t" style="left:734.40px;top:368.03px;font-size:10.6px;line-height:10.6px;font-weight:400;color:#1d1f25;letter-spacing:-0.34px;word-spacing:1.6px;-webkit-text-stroke:0.12px #1d1f25">THREAD PLUG GAUGE</div>
<div class="r" style="left:195.00px;top:410.00px;width:791.00px;height:1.00px;background:#e6e6e6;"></div>
<div class="t" style="left:208.50px;top:392.86px;font-size:10.8px;line-height:10.8px;font-weight:400;color:#6e6e6e;-webkit-text-stroke:0.1px #6e6e6e">12</div>
<div class="t" style="left:261.70px;top:393.94px;font-size:10.7px;line-height:10.7px;font-weight:400;color:#1d1f25;-webkit-text-stroke:0.12px #1d1f25">RMEN00012</div>
<div class="t" style="left:367.10px;top:393.94px;font-size:10.7px;line-height:10.7px;font-weight:400;color:#1d1f25;-webkit-text-stroke:0.12px #1d1f25">CAPG10515</div>
<div class="r" style="left:494.50px;top:391.05px;width:43.40px;height:14.40px;background:#cab3b6;border-radius:7.2px"></div>
<div class="t" style="left:501.60px;top:393.11px;font-size:10.5px;line-height:10.5px;font-weight:400;color:#1d1f25;letter-spacing:-0.3px">RMEN</div>
<div class="t" style="right:361.40px;top:393.94px;font-size:10.7px;line-height:10.7px;font-weight:400;color:#1d1f25;-webkit-text-stroke:0.12px #1d1f25">12</div>
<div class="t" style="left:734.40px;top:394.03px;font-size:10.6px;line-height:10.6px;font-weight:400;color:#1d1f25;letter-spacing:-0.34px;word-spacing:1.6px;-webkit-text-stroke:0.12px #1d1f25">DIAL TYPE DEPTH GAUGE RANGE :0-</div>
<div class="r" style="left:195.00px;top:437.00px;width:791.00px;height:1.00px;background:#e6e6e6;"></div>
<div class="t" style="left:208.50px;top:418.86px;font-size:10.8px;line-height:10.8px;font-weight:400;color:#6e6e6e;-webkit-text-stroke:0.1px #6e6e6e">13</div>
<div class="t" style="left:261.70px;top:420.94px;font-size:10.7px;line-height:10.7px;font-weight:400;color:#1d1f25;-webkit-text-stroke:0.12px #1d1f25">RMEN00013</div>
<div class="t" style="left:367.10px;top:420.94px;font-size:10.7px;line-height:10.7px;font-weight:400;color:#1d1f25;-webkit-text-stroke:0.12px #1d1f25">CAPG10538</div>
<div class="r" style="left:494.50px;top:417.33px;width:43.40px;height:14.40px;background:#cab3b6;border-radius:7.2px"></div>
<div class="t" style="left:501.60px;top:419.11px;font-size:10.5px;line-height:10.5px;font-weight:400;color:#1d1f25;letter-spacing:-0.3px">RMEN</div>
<div class="t" style="right:361.40px;top:420.94px;font-size:10.7px;line-height:10.7px;font-weight:400;color:#1d1f25;-webkit-text-stroke:0.12px #1d1f25">13</div>
<div class="t" style="left:734.40px;top:421.03px;font-size:10.6px;line-height:10.6px;font-weight:400;color:#1d1f25;letter-spacing:-0.34px;word-spacing:1.6px;-webkit-text-stroke:0.12px #1d1f25">WELDING MACHINE ARGON TORCH GC-</div>
<div class="r" style="left:195.00px;top:463.00px;width:791.00px;height:1.00px;background:#e6e6e6;"></div>
<div class="t" style="left:208.50px;top:445.86px;font-size:10.8px;line-height:10.8px;font-weight:400;color:#6e6e6e;-webkit-text-stroke:0.1px #6e6e6e">14</div>
<div class="t" style="left:261.70px;top:446.94px;font-size:10.7px;line-height:10.7px;font-weight:400;color:#1d1f25;-webkit-text-stroke:0.12px #1d1f25">RMEN00014</div>
<div class="t" style="left:367.10px;top:446.94px;font-size:10.7px;line-height:10.7px;font-weight:400;color:#1d1f25;-webkit-text-stroke:0.12px #1d1f25">EXEM10005</div>
<div class="r" style="left:494.50px;top:443.62px;width:43.40px;height:14.40px;background:#cab3b6;border-radius:7.2px"></div>
<div class="t" style="left:501.60px;top:446.11px;font-size:10.5px;line-height:10.5px;font-weight:400;color:#1d1f25;letter-spacing:-0.3px">RMEN</div>
<div class="t" style="right:361.40px;top:446.94px;font-size:10.7px;line-height:10.7px;font-weight:400;color:#1d1f25;-webkit-text-stroke:0.12px #1d1f25">14</div>
<div class="t" style="left:734.40px;top:447.03px;font-size:10.6px;line-height:10.6px;font-weight:400;color:#1d1f25;letter-spacing:-0.34px;word-spacing:1.6px;-webkit-text-stroke:0.12px #1d1f25">EXPENSE EMAAR</div>
<div class="r" style="left:195.00px;top:489.00px;width:791.00px;height:1.00px;background:#e6e6e6;"></div>
<div class="t" style="left:208.50px;top:471.86px;font-size:10.8px;line-height:10.8px;font-weight:400;color:#6e6e6e;-webkit-text-stroke:0.1px #6e6e6e">15</div>
<div class="t" style="left:261.70px;top:472.94px;font-size:10.7px;line-height:10.7px;font-weight:400;color:#1d1f25;-webkit-text-stroke:0.12px #1d1f25">RMEN00015</div>
<div class="t" style="left:367.10px;top:472.94px;font-size:10.7px;line-height:10.7px;font-weight:400;color:#1d1f25;-webkit-text-stroke:0.12px #1d1f25">EXEN10002</div>
<div class="r" style="left:494.50px;top:469.90px;width:43.40px;height:14.40px;background:#cab3b6;border-radius:7.2px"></div>
<div class="t" style="left:501.60px;top:472.11px;font-size:10.5px;line-height:10.5px;font-weight:400;color:#1d1f25;letter-spacing:-0.3px">RMEN</div>
<div class="t" style="right:361.40px;top:472.94px;font-size:10.7px;line-height:10.7px;font-weight:400;color:#1d1f25;-webkit-text-stroke:0.12px #1d1f25">15</div>
<div class="t" style="left:734.40px;top:473.03px;font-size:10.6px;line-height:10.6px;font-weight:400;color:#1d1f25;letter-spacing:-0.34px;word-spacing:1.6px;-webkit-text-stroke:0.12px #1d1f25">EXPENSE ENGEERING</div>
<div class="r" style="left:195.00px;top:516.00px;width:791.00px;height:1.00px;background:#e6e6e6;"></div>
<div class="t" style="left:208.50px;top:497.86px;font-size:10.8px;line-height:10.8px;font-weight:400;color:#6e6e6e;-webkit-text-stroke:0.1px #6e6e6e">16</div>
<div class="t" style="left:261.70px;top:498.94px;font-size:10.7px;line-height:10.7px;font-weight:400;color:#1d1f25;-webkit-text-stroke:0.12px #1d1f25">RMEN00016</div>
<div class="t" style="left:367.10px;top:498.94px;font-size:10.7px;line-height:10.7px;font-weight:400;color:#1d1f25;-webkit-text-stroke:0.12px #1d1f25">FGEN00303</div>
<div class="r" style="left:494.50px;top:496.19px;width:43.40px;height:14.40px;background:#cab3b6;border-radius:7.2px"></div>
<div class="t" style="left:501.60px;top:498.11px;font-size:10.5px;line-height:10.5px;font-weight:400;color:#1d1f25;letter-spacing:-0.3px">RMEN</div>
<div class="t" style="right:361.40px;top:498.94px;font-size:10.7px;line-height:10.7px;font-weight:400;color:#1d1f25;-webkit-text-stroke:0.12px #1d1f25">16</div>
<div class="t" style="left:734.40px;top:499.03px;font-size:10.6px;line-height:10.6px;font-weight:400;color:#1d1f25;letter-spacing:-0.34px;word-spacing:1.6px;-webkit-text-stroke:0.12px #1d1f25">HEX ROD 35 MM SS 316</div>
<div class="r" style="left:486.00px;top:69.00px;width:2.00px;height:448.00px;background:#ececec;"></div>
<div class="r" style="left:565.00px;top:69.00px;width:1.00px;height:448.00px;background:#e3e3e3;"></div>
<div class="r" style="left:630.00px;top:69.00px;width:1.00px;height:448.00px;background:#e3e3e3;"></div>
<div class="r" style="left:727.00px;top:69.00px;width:2.00px;height:448.00px;background:#ececec;"></div>
<div class="r" style="left:951.00px;top:69.00px;width:1.00px;height:448.00px;background:#e3e3e3;"></div>
<div class="r" style="left:360.00px;top:69.00px;width:1.00px;height:448.00px;background:#dcdcdc;"></div>
<div class="r" style="left:361.00px;top:69.00px;width:1.00px;height:448.00px;background:#c4c4c4;"></div>
<div class="r" style="left:210.00px;top:77.20px;width:9.80px;height:10.00px;background:transparent;border:1.1px solid #959595;border-radius:1.5px;box-sizing:border-box"></div>
<svg class="r" style="left:242.50px;top:77.50px" width="7" height="8" viewBox="0 0 7 8"><path d="M1.8 3.6V2.6A1.7 1.7 0 0 1 5.2 2.6V3.6" fill="none" stroke="#bababa" stroke-width="1.1"/><rect x="0.6" y="3.6" width="5.8" height="4.2" rx="0.8" fill="#bababa"/></svg>
<svg class="r" style="left:261.00px;top:76.50px" width="15" height="12" viewBox="0 0 15 12"><path d="M5.2 1.1C4.3 0.6 3.5 1.0 3.2 2.4L2 9.3C1.8 10.1 1.3 10.5 0.8 10.3" fill="none" stroke="#505050" stroke-width="1.55" stroke-linecap="round"/><path d="M1.6 4.2H4.9" stroke="#505050" stroke-width="1.2"/><path d="M6.9 3.6C6 5.3 6 8.6 6.9 10.4M12.5 3.6C13.4 5.3 13.4 8.6 12.5 10.4" fill="none" stroke="#5a5a5a" stroke-width="1.15"/><path d="M8.4 5.8L11 8.4M11 5.8L8.4 8.4" stroke="#5a5a5a" stroke-width="1.15"/></svg>
<div class="t" style="left:279.70px;top:77.03px;font-size:10.6px;line-height:10.6px;font-weight:400;color:#333;-webkit-text-stroke:0.15px #333">SAP Code</div>
<svg class="r" style="left:342.00px;top:80.00px" width="9" height="5" viewBox="0 0 9 5"><path d="M0.3 0.3H8.5L4.4 4.3Z" fill="#8a8a8a"/></svg>
<svg class="r" style="left:369.20px;top:77.80px" width="9" height="9" viewBox="0 0 9 9"><path d="M0 0.8H7.6M3.8 0.8V8.2" stroke="#5a5a5a" stroke-width="1.5"/></svg>
<div class="t" style="left:385.10px;top:76.77px;font-size:10.9px;line-height:10.9px;font-weight:400;color:#333;-webkit-text-stroke:0.15px #333">Existing Codes</div>
<svg class="r" style="left:468.30px;top:80.00px" width="9" height="5" viewBox="0 0 9 5"><path d="M0.3 0.3H8.5L4.4 4.3Z" fill="#8a8a8a"/></svg>
<svg class="r" style="left:493.60px;top:77.20px" width="12" height="12" viewBox="0 0 12 12"><circle cx="5.8" cy="5.6" r="5.6" fill="#6b6b6b"/><path d="M3.3 4.5H8.3L5.8 7.3Z" fill="#f4f4f4"/></svg>
<div class="t" style="left:511.70px;top:76.94px;font-size:10.7px;line-height:10.7px;font-weight:400;color:#333;-webkit-text-stroke:0.15px #333">Type</div>
<svg class="r" style="left:546.90px;top:80.00px" width="9" height="5" viewBox="0 0 9 5"><path d="M0.3 0.3H8.5L4.4 4.3Z" fill="#8a8a8a"/></svg>
<div class="t" style="left:573.30px;top:77.28px;font-size:10.3px;line-height:10.3px;font-weight:400;color:#6a6a6a;">+1</div>
<div class="t" style="left:589.60px;top:76.94px;font-size:10.7px;line-height:10.7px;font-weight:400;color:#333;-webkit-text-stroke:0.15px #333">ID</div>
<svg class="r" style="left:611.70px;top:80.00px" width="9" height="5" viewBox="0 0 9 5"><path d="M0.3 0.3H8.5L4.4 4.3Z" fill="#8a8a8a"/></svg>
<svg class="r" style="left:637.50px;top:78.50px" width="12" height="9" viewBox="0 0 12 9"><path d="M4 2.6H11M8.8 0.6L11 2.6 8.8 4.6" fill="none" stroke="#555" stroke-width="1.2"/><path d="M8 6.4H1M3.2 4.4L1 6.4 3.2 8.4" fill="none" stroke="#555" stroke-width="1.2"/></svg>
<div class="t" style="left:655.00px;top:76.77px;font-size:10.9px;line-height:10.9px;font-weight:400;color:#333;-webkit-text-stroke:0.15px #333">Vertical</div>
<svg class="r" style="left:709.30px;top:80.00px" width="9" height="5" viewBox="0 0 9 5"><path d="M0.3 0.3H8.5L4.4 4.3Z" fill="#8a8a8a"/></svg>
<svg class="r" style="left:737.10px;top:77.80px" width="9" height="9" viewBox="0 0 9 9"><path d="M0 0.8H7.6M3.8 0.8V8.2" stroke="#5a5a5a" stroke-width="1.5"/></svg>
<div class="t" style="left:752.40px;top:76.94px;font-size:10.7px;line-height:10.7px;font-weight:400;color:#333;-webkit-text-stroke:0.15px #333">Item Desc</div>
<svg class="r" style="left:932.20px;top:80.00px" width="9" height="5" viewBox="0 0 9 5"><path d="M0.3 0.3H8.5L4.4 4.3Z" fill="#8a8a8a"/></svg>
<svg class="r" style="left:960.30px;top:77.80px" width="9" height="9" viewBox="0 0 9 9"><path d="M0 0.8H7.6M3.8 0.8V8.2" stroke="#5a5a5a" stroke-width="1.5"/></svg>
<div class="t" style="left:975.40px;top:76.94px;font-size:10.7px;line-height:10.7px;font-weight:400;color:#333;-webkit-text-stroke:0.15px #333">Gr</div>
<div class="r" style="left:977.30px;top:69.50px;width:7.50px;height:31.50px;background:rgba(120,120,120,0.45);border-radius:4px"></div>
</body></html>
